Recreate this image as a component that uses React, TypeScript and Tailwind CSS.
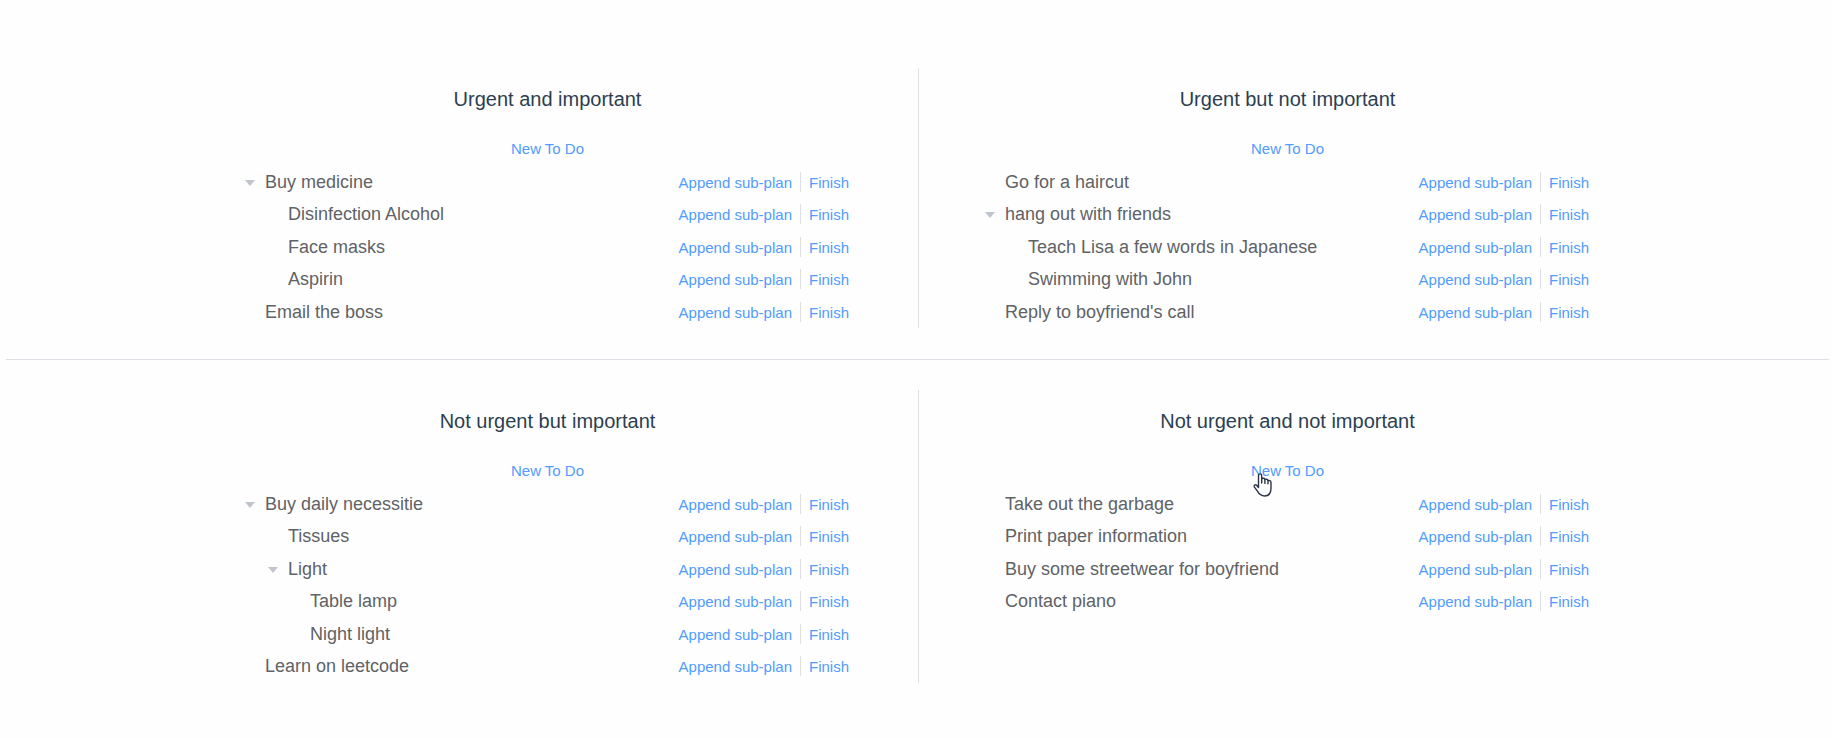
import { useState } from 'react';

type Plan = { label: string; children?: Plan[] };
type Quadrant = { title: string; plans: Plan[]; pointer?: boolean };
type Row = { plan: Plan; depth: number };

const quadrants: Quadrant[][] = [
  [
    {
      title: 'Urgent and important',
      plans: [
        {
          label: 'Buy medicine',
          children: [{ label: 'Disinfection Alcohol' }, { label: 'Face masks' }, { label: 'Aspirin' }],
        },
        { label: 'Email the boss' },
      ],
    },
    {
      title: 'Urgent but not important',
      plans: [
        { label: 'Go for a haircut' },
        {
          label: 'hang out with friends',
          children: [{ label: 'Teach Lisa a few words in Japanese' }, { label: 'Swimming with John' }],
        },
        { label: "Reply to boyfriend's call" },
      ],
    },
  ],
  [
    {
      title: 'Not urgent but important',
      plans: [
        {
          label: 'Buy daily necessitie',
          children: [
            { label: 'Tissues' },
            { label: 'Light', children: [{ label: 'Table lamp' }, { label: 'Night light' }] },
          ],
        },
        { label: 'Learn on leetcode' },
      ],
    },
    {
      title: 'Not urgent and not important',
      pointer: true,
      plans: [
        { label: 'Take out the garbage' },
        { label: 'Print paper information' },
        { label: 'Buy some streetwear for boyfriend' },
        { label: 'Contact piano' },
      ],
    },
  ],
];

const indents = ['pl-0', 'pl-[23px]', 'pl-[45px]'];

function visibleRows(plans: Plan[], closed: string[], depth = 0): Row[] {
  return plans.flatMap((plan) => [
    { plan, depth },
    ...(plan.children && !closed.includes(plan.label) ? visibleRows(plan.children, closed, depth + 1) : []),
  ]);
}

function HandPointer() {
  return (
    <svg
      className="pointer-events-none absolute top-[21px] left-0.5 h-6 w-5"
      viewBox="0 0 20 24"
      fill="#fefefe"
      stroke="#2b3446"
      strokeWidth="1.4"
      strokeLinejoin="round"
      strokeLinecap="round"
      aria-hidden="true"
    >
      <path d="M5.5 14.5V2.4C5.5 0.3 8.7 0.3 8.7 2.4V5.6C9.6 4.9 11.6 5.1 11.9 6.5C12.9 5.8 14.7 6.2 15 7.6C16.2 7.1 18 7.7 18 9.5V15C18 20 15.5 23 11.6 23C7.5 23 6 21 4.4 18.2L1.3 13.8C0.6 12.2 2.3 11 3.6 12.2Z" />
      <path d="M8.7 5.6V10M11.9 6.6V10.4M15 7.7V10.8" fill="none" />
    </svg>
  );
}

function Tree({ plans }: { plans: Plan[] }) {
  const [closed, setClosed] = useState<string[]>([]);
  const toggle = (label: string) =>
    setClosed((now) => (now.includes(label) ? now.filter((item) => item !== label) : [...now, label]));

  return (
    <ul>
      {visibleRows(plans, closed).map(({ plan, depth }) => (
        <li key={plan.label} className="odd:pb-0 even:pb-px">
          <div className={`flex h-8 items-center pr-[11px] ${indents[depth]}`}>
            {plan.children ? (
              <button
                type="button"
                aria-label={`Toggle ${plan.label}`}
                aria-expanded={!closed.includes(plan.label)}
                onClick={() => toggle(plan.label)}
                className="flex h-8 w-[30px] shrink-0 cursor-pointer items-center justify-center pt-0.5"
              >
                <svg
                  className={closed.includes(plan.label) ? '-rotate-90' : ''}
                  width="10"
                  height="6"
                  viewBox="0 0 10 6"
                  fill="#c0c4cc"
                  aria-hidden="true"
                >
                  <path d="M0 0H10L5 6Z" />
                </svg>
              </button>
            ) : (
              <span className="w-[30px] shrink-0" />
            )}
            <span className="flex-1 truncate text-lg leading-8 text-[#606266]">{plan.label}</span>
            <button type="button" className="cursor-pointer pt-0.5 text-[15px] leading-5 text-[#509cff]">
              Append sub-plan
            </button>
            <span className="mx-2 h-5 w-px bg-[#dcdfe6]" />
            <button type="button" className="cursor-pointer pt-0.5 text-[15px] leading-5 text-[#509cff]">
              Finish
            </button>
          </div>
        </li>
      ))}
    </ul>
  );
}

function QuadrantPanel({ quadrant }: { quadrant: Quadrant }) {
  return (
    <section className="w-full max-w-[625px]">
      <h2 className="text-center text-xl leading-[62px] text-[#2c3e50]">{quadrant.title}</h2>
      <div className="flex h-9 justify-center">
        <button type="button" className="relative cursor-pointer pt-px text-[15px] leading-9 text-[#509cff]">
          New To Do
          {quadrant.pointer && <HandPointer />}
        </button>
      </div>
      <Tree plans={quadrant.plans} />
    </section>
  );
}

export default function App() {
  return (
    <main className="min-h-screen bg-[#fefefe] py-[68px] pr-[3px] pl-1.5 font-['Liberation_Sans',Arial,sans-serif]">
      {quadrants.map(([left, right], index) => (
        <div key={left.title}>
          {index > 0 && <hr className="mt-[31px] mb-[30px] border-t border-[#dcdfe6]" />}
          <div className="flex justify-center">
            <QuadrantPanel quadrant={left} />
            <div className="mr-14 ml-[58px] w-px shrink-0 bg-[#dcdfe6]" />
            <QuadrantPanel quadrant={right} />
          </div>
        </div>
      ))}
    </main>
  );
}
